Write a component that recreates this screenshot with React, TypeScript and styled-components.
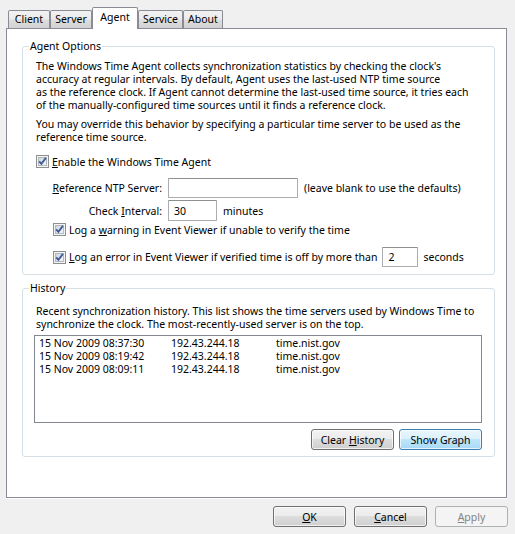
import React from "react";
import styled, { createGlobalStyle } from "styled-components";

const GlobalStyle = createGlobalStyle`
  html, body {
    margin: 0;
    padding: 0;
    background: #f0f0f0;
  }
  body {
    font-family: "Noto Sans", "Liberation Sans", sans-serif;
    font-size: 10.5px;
    color: #000;
  }
`;

// DIALOG FRAME
const Dialog = styled.div`
  width: 515px;
  height: 534px;
  background: #f0f0f0;
  display: flex;
  flex-direction: column;
  overflow: hidden;
`;

const TabStrip = styled.div`
  display: flex;
  align-items: flex-end;
  height: 28px;
  padding-left: 8px;
  position: relative;
  z-index: 1;
`;

const Tab = styled.div<{ $active?: boolean; $width: number }>`
  box-sizing: border-box;
  width: ${p => p.$width}px;
  height: ${p => (p.$active ? 22 : 18)}px;
  margin-bottom: ${p => (p.$active ? -1 : 0)}px;
  border: 1px solid #898c95;
  border-bottom: none;
  border-radius: 2px 2px 0 0;
  background: ${p =>
    p.$active
      ? "#fff"
      : "linear-gradient(#f2f2f2 0%, #ebebeb 45%, #dddddd 55%, #d2d2d2 100%)"};
  display: flex;
  justify-content: center;
  padding-top: ${p => (p.$active ? 2 : 1)}px;
  line-height: 14px;
`;

const Panel = styled.div`
  box-sizing: border-box;
  margin-left: 6px;
  width: 501px;
  height: 470px;
  border: 1px solid #898c95;
  background: #fff;
  box-shadow: 0 1px 0 #fff;
  padding: 17px 0 0 15px;
`;

// GROUP BOXES
const GroupBox = styled.section<{ $height: number }>`
  position: relative;
  box-sizing: border-box;
  width: 473px;
  height: ${p => p.$height}px;
  border: 1px solid #d5dfe5;
  border-radius: 3px;
  padding: 0 12px 0 13px;
  & + & {
    margin-top: 13px;
  }
`;

const GroupTitle = styled.span`
  position: absolute;
  top: -7px;
  left: 6px;
  padding: 0 1px;
  background: #fff;
  line-height: 13px;
`;

const Para = styled.p<{ $top: number }>`
  margin: ${p => p.$top}px 0 0;
  line-height: 13px;
  white-space: nowrap;
`;

const Key = styled.span`
  text-decoration: underline;
`;

// CHECKBOXES AND FIELDS
const CheckRow = styled.label<{ $top: number; $indent: number }>`
  display: flex;
  align-items: center;
  gap: 3px;
  height: 17px;
  margin-top: ${p => p.$top}px;
  padding-left: ${p => p.$indent}px;
  white-space: nowrap;
`;

const FieldRow = styled.div<{ $top: number; $height: number; $gap: number }>`
  display: flex;
  align-items: center;
  gap: ${p => p.$gap}px;
  height: ${p => p.$height}px;
  margin-top: ${p => p.$top}px;
  white-space: nowrap;
`;

const FieldLabel = styled.span`
  box-sizing: border-box;
  width: 126px;
  padding-left: 16px;
  text-align: right;
`;

const TextBox = styled.input<{ $width: number; $height: number }>`
  box-sizing: border-box;
  width: ${p => p.$width}px;
  height: ${p => p.$height}px;
  margin: 0;
  padding: 0 5px;
  border: 1px solid #abadb3;
  border-top-color: #8e8f8f;
  border-radius: 1px;
  background: #fff;
  font: inherit;
  color: #000;
  outline: none;
`;

const Check = () => (
  <svg width="13" height="13" viewBox="0 0 13 13">
    <defs>
      <linearGradient id="cbfill" x1="0" y1="0" x2="1" y2="1">
        <stop offset="0" stopColor="#cfd3d9" />
        <stop offset="1" stopColor="#f8f8f8" />
      </linearGradient>
    </defs>
    <rect x="0.5" y="0.5" width="12" height="12" fill="#f4f4f4" stroke="#8e8f8f" />
    <rect x="2.5" y="2.5" width="8" height="8" fill="url(#cbfill)" stroke="#b4b9bf" />
    <path d="M3.2 6.3 L5.4 8.9 L9.9 2.9" fill="none" stroke="#3a5a9c" strokeWidth="1.8" />
  </svg>
);

// HISTORY LIST
const HistoryList = styled.div`
  box-sizing: border-box;
  margin: 4px 0 0 -2px;
  width: 448px;
  height: 88px;
  border: 1px solid #828790;
  background: #fff;
  padding: 1px 0 0 4px;
`;

const HistoryEntry = styled.div`
  display: grid;
  grid-template-columns: 132px 105px 1fr;
  line-height: 13px;
`;

// BUTTONS
const ButtonRow = styled.div<{ $top: number; $gap: number; $right: number }>`
  display: flex;
  justify-content: flex-end;
  gap: ${p => p.$gap}px;
  margin-top: ${p => p.$top}px;
  padding-right: ${p => p.$right}px;
`;

const Button = styled.button<{ $width: number; $variant?: "default" | "disabled" }>`
  box-sizing: border-box;
  width: ${p => p.$width}px;
  height: 21px;
  padding: 0;
  font: inherit;
  color: ${p => (p.$variant === "disabled" ? "#838383" : "#000")};
  border: 1px solid
    ${p =>
      p.$variant === "default"
        ? "#3c7fb1"
        : p.$variant === "disabled"
        ? "#adb2b5"
        : "#707070"};
  border-radius: 3px;
  background: ${p =>
    p.$variant === "default"
      ? "linear-gradient(#eaf6fd 0%, #d9f0fc 50%, #bee6fd 50%, #a7d9f5 100%)"
      : p.$variant === "disabled"
      ? "#f4f4f4"
      : "linear-gradient(#f2f2f2 0%, #ebebeb 50%, #dddddd 50%, #cfcfcf 100%)"};
  box-shadow: inset 0 0 0 1px
    ${p => (p.$variant === "disabled" ? "#f4f4f4" : "rgba(255, 255, 255, 0.7)")};
`;

const history = [
  { when: "15 Nov 2009 08:37:30", ip: "192.43.244.18", host: "time.nist.gov" },
  { when: "15 Nov 2009 08:19:42", ip: "192.43.244.18", host: "time.nist.gov" },
  { when: "15 Nov 2009 08:09:11", ip: "192.43.244.18", host: "time.nist.gov" },
];

export default function App() {
  return (
    <Dialog>
      <GlobalStyle />
      <TabStrip>
        <Tab $width={42}>Client</Tab>
        <Tab $width={42}>Server</Tab>
        <Tab $width={46} $active>
          Agent
        </Tab>
        <Tab $width={45}>Service</Tab>
        <Tab $width={40}>About</Tab>
      </TabStrip>
      <Panel>
        <GroupBox $height={229}>
          <GroupTitle>Agent Options</GroupTitle>
          <Para $top={13}>
            The Windows Time Agent collects synchronization statistics by checking the clock's
            <br />
            accuracy at regular intervals. By default, Agent uses the last-used NTP time source
            <br />
            as the reference clock. If Agent cannot determine the last-used time source, it tries each
            <br />
            of the manually-configured time sources until it finds a reference clock.
          </Para>
          <Para $top={6}>
            You may override this behavior by specifying a particular time server to be used as the
            <br />
            reference time source.
          </Para>
          <CheckRow $top={9} $indent={0}>
            <Check />
            <span>
              <Key>E</Key>nable the Windows Time Agent
            </span>
          </CheckRow>
          <FieldRow $top={7} $height={21} $gap={6}>
            <FieldLabel>
              <Key>R</Key>eference NTP Server:
            </FieldLabel>
            <TextBox $width={130} $height={20} defaultValue="" readOnly />
            <span>(leave blank to use the defaults)</span>
          </FieldRow>
          <FieldRow $top={2} $height={21} $gap={6}>
            <FieldLabel>
              Check <Key>I</Key>nterval:
            </FieldLabel>
            <TextBox $width={49} $height={21} defaultValue="30" readOnly />
            <span>minutes</span>
          </FieldRow>
          <CheckRow $top={0} $indent={17}>
            <Check />
            <span>
              Log a <Key>w</Key>arning in Event Viewer if unable to verify the time
            </span>
          </CheckRow>
          <FieldRow $top={9} $height={20} $gap={5}>
            <CheckRow $top={0} $indent={17}>
              <Check />
              <span>
                <Key>L</Key>og an error in Event Viewer if verified time is off by more than
              </span>
            </CheckRow>
            <TextBox $width={36} $height={20} defaultValue="2" readOnly />
            <span>seconds</span>
          </FieldRow>
        </GroupBox>
        <GroupBox $height={169}>
          <GroupTitle>History</GroupTitle>
          <Para $top={16}>
            Recent synchronization history. This list shows the time servers used by Windows Time to
            <br />
            synchronize the clock. The most-recently-used server is on the top.
          </Para>
          <HistoryList>
            {history.map(h => (
              <HistoryEntry key={h.when}>
                <span>{h.when}</span>
                <span>{h.ip}</span>
                <span>{h.host}</span>
              </HistoryEntry>
            ))}
          </HistoryList>
          <ButtonRow $top={6} $gap={5} $right={0}>
            <Button $width={83}>
              Clear <Key>H</Key>istory
            </Button>
            <Button $width={83} $variant="default">
              Show Graph
            </Button>
          </ButtonRow>
        </GroupBox>
      </Panel>
      <ButtonRow $top={8} $gap={8} $right={7}>
        <Button $width={73}>
          <Key>O</Key>K
        </Button>
        <Button $width={73}>
          <Key>C</Key>ancel
        </Button>
        <Button $width={73} $variant="disabled">
          <Key>A</Key>pply
        </Button>
      </ButtonRow>
    </Dialog>
  );
}
